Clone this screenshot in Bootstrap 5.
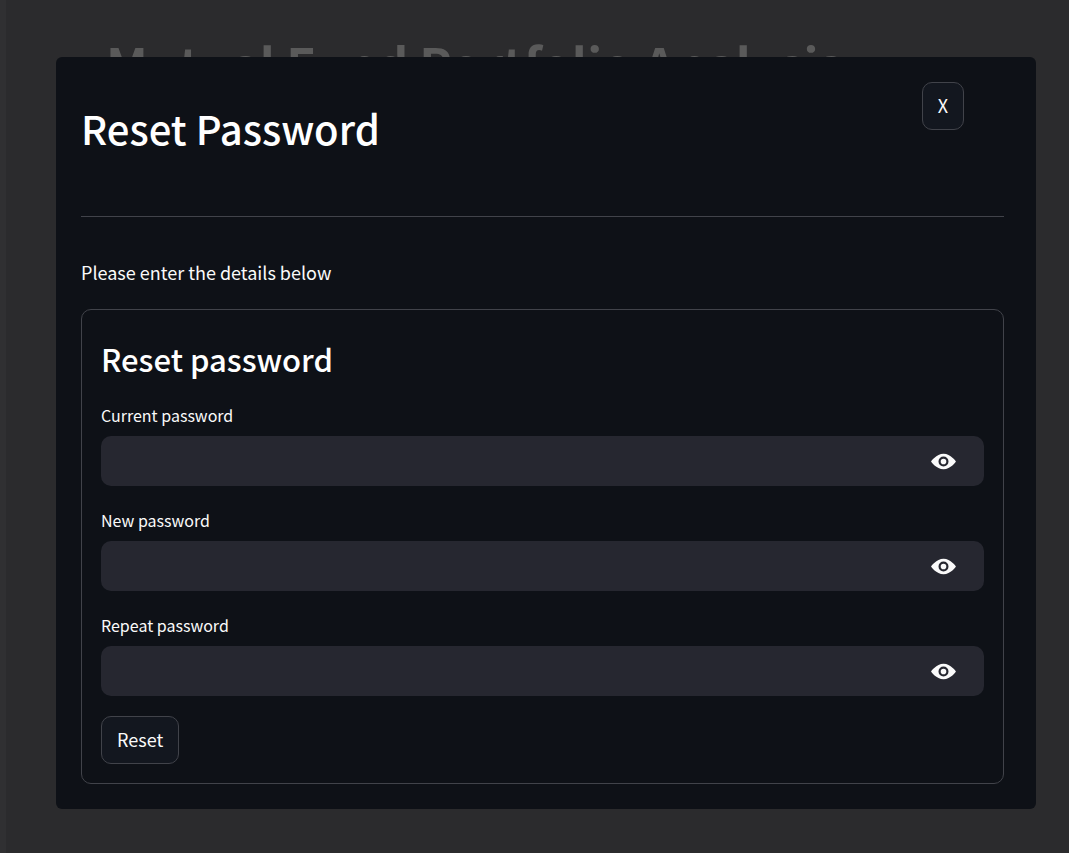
<!DOCTYPE html>
<html lang="en" data-bs-theme="dark">
<head>
<meta charset="utf-8">
<meta name="viewport" content="width=device-width, initial-scale=1">
<title>Mutual Fund Portfolio Analysis</title>
<link href="https://cdn.jsdelivr.net/npm/bootstrap@5.3.0/dist/css/bootstrap.min.css" rel="stylesheet">
<style>
  body { background: #2b2b2d; color: #fafafa; font-family: "Noto Sans CJK SC", "Noto Sans", sans-serif; font-size: 18px; line-height: 32px; }
  .app { border-left: 6px solid #303032; padding: 33px 100px; }
  .app-title { color: #5a5a5a; font-size: 49px; line-height: 60px; font-weight: 700; margin: 0; white-space: nowrap; }
  .modal { padding: 57px 33px 44px 56px; }
  .modal-dialog { max-width: none; margin: 0; }
  .modal-content { background: #0e1117; border: 0; border-radius: 6px; padding: 25px 32px 25px 25px; color: #fafafa; }
  .dialog-title { font-size: 40px; line-height: 48px; font-weight: 500; margin: 0; padding-top: 22px; }
  .rule { border: 0; border-top: 1px solid #41434a; opacity: 1; margin: 64px 0 39px; }
  .form-box { border: 1px solid #41434a; border-radius: 10px; padding: 19px; margin-top: 21px; }
  .form-title { font-size: 31px; line-height: 36px; font-weight: 500; margin: 12px 0 26px; }
  .form-label { font-size: 16px; line-height: 24px; margin-bottom: 9px; }
  .field { margin-bottom: 22px; }
  .field:last-of-type { margin-bottom: 20px; }
  .field .input-group { background: #262730; border-radius: 10px; }
  .field .form-control { background: transparent; border: 0; height: 50px; color: #fafafa; font-size: 18px; }
  .eye { background: transparent; border: 0; color: #fafafa; padding: 0 28px 0 16px; }
  .eye svg { display: block; }
  .action { background: #13171f; border: 1px solid #41434a; border-radius: 10px; color: #fafafa; font-size: 18px; line-height: 32px; padding: 6px 15px 8px; }
</style>
</head>
<body>
<main class="app min-vh-100">
  <h1 class="app-title">Mutual Fund Portfolio Analysis</h1>
</main>

<div class="modal show d-block" role="dialog" aria-labelledby="dialogTitle">
  <div class="modal-dialog">
    <div class="modal-content">
      <div class="d-flex align-items-start justify-content-between pe-4 me-3">
        <h2 class="dialog-title" id="dialogTitle">Reset Password</h2>
        <button type="button" class="btn action">X</button>
      </div>
      <hr class="rule">
      <p class="m-0">Please enter the details below</p>
      <form class="form-box">
        <h3 class="form-title">Reset password</h3>
        <div class="field">
          <label class="form-label d-block" for="current">Current password</label>
          <div class="input-group">
            <input type="password" class="form-control" id="current">
            <button type="button" class="btn eye" aria-label="Show current password"><svg width="25" height="25" viewBox="0 0 8 8" fill="currentColor"><path d="M4.030 1.500C1.700 1.500 0 4 0 4s1.700 2.500 4.030 2.500C6.300 6.500 8 4 8 4S6.300 1.500 4.030 1.500zM4 2.400a1.600 1.600 0 1 1 0 3.200 1.600 1.600 0 0 1 0-3.200zm0 .7a.9.9 0 1 0 0 1.800.9.9 0 0 0 0-1.800z"/></svg></button>
          </div>
        </div>
        <div class="field">
          <label class="form-label d-block" for="new">New password</label>
          <div class="input-group">
            <input type="password" class="form-control" id="new">
            <button type="button" class="btn eye" aria-label="Show new password"><svg width="25" height="25" viewBox="0 0 8 8" fill="currentColor"><path d="M4.030 1.500C1.700 1.500 0 4 0 4s1.700 2.500 4.030 2.500C6.300 6.500 8 4 8 4S6.300 1.500 4.030 1.500zM4 2.400a1.600 1.600 0 1 1 0 3.200 1.600 1.600 0 0 1 0-3.200zm0 .7a.9.9 0 1 0 0 1.800.9.9 0 0 0 0-1.800z"/></svg></button>
          </div>
        </div>
        <div class="field">
          <label class="form-label d-block" for="repeat">Repeat password</label>
          <div class="input-group">
            <input type="password" class="form-control" id="repeat">
            <button type="button" class="btn eye" aria-label="Show repeated password"><svg width="25" height="25" viewBox="0 0 8 8" fill="currentColor"><path d="M4.030 1.500C1.700 1.500 0 4 0 4s1.700 2.500 4.030 2.500C6.300 6.500 8 4 8 4S6.300 1.500 4.030 1.500zM4 2.400a1.600 1.600 0 1 1 0 3.200 1.600 1.600 0 0 1 0-3.200zm0 .7a.9.9 0 1 0 0 1.800.9.9 0 0 0 0-1.800z"/></svg></button>
          </div>
        </div>
        <button type="submit" class="btn action d-block">Reset</button>
      </form>
    </div>
  </div>
</div>
<script src="https://cdn.jsdelivr.net/npm/bootstrap@5.3.0/dist/js/bootstrap.bundle.min.js"></script>
</body>
</html>
